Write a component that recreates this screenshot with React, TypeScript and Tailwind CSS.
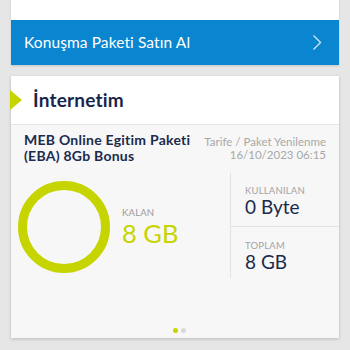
import React from "react";

export default function App() {
  return (
    <div
      className="w-[350px] h-[350px] overflow-hidden bg-[#e6e6e6] px-[11px]"
      style={{ fontFamily: "Lato, 'Open Sans', sans-serif" }}
    >
      <div className="shadow-[0_1px_2px_rgba(0,0,0,0.15)]">
        <div className="h-[20px] bg-white" />
        <div className="h-[45px] bg-[#0a85cf] flex items-center justify-between pl-[13px] pr-[17px]">
          <span className="text-white text-[15.5px] tracking-[0.1px]">Konuşma Paketi Satın Al</span>
          <svg width="10" height="17" viewBox="0 0 10 17" fill="none">
            <path d="M1.5 1.5 L8.5 8.5 L1.5 15.5" stroke="#cfe6f5" strokeWidth="1.4" />
          </svg>
        </div>
      </div>

      <div className="mt-[11px] h-[262px] bg-[#f7f7f7] shadow-[0_1px_3px_rgba(0,0,0,0.2)] flex flex-col">
        <div className="h-[49px] bg-white border-b border-[#e4e4e4] flex items-center">
          <svg width="12" height="20" viewBox="0 0 12 20" className="ml-[-1px]">
            <polygon points="0,0 12,10 0,20" fill="#c6d400" />
          </svg>
          <span className="ml-[11px] text-[#16264a] text-[19px] font-bold tracking-[0.2px]">İnternetim</span>
        </div>

        <div className="flex justify-between pl-[13px] pr-[13px] pt-[7px]">
          <div className="text-[#1b2b4d] text-[14px] font-bold leading-[16px] tracking-[0.25px]">
            <div>MEB Online Egitim Paketi</div>
            <div>(EBA) 8Gb Bonus</div>
          </div>
          <div className="text-[#a8a8a8] text-[11.5px] leading-[13px] text-right pt-[3px]">
            <div>Tarife / Paket Yenilenme</div>
            <div>16/10/2023 06:15</div>
          </div>
        </div>

        <div className="flex mt-[9px] h-[105px]">
          <div className="flex w-[219px]">
            <svg width="94" height="94" viewBox="0 0 94 94" className="ml-[6px] mt-[7px]">
              <circle cx="47" cy="47" r="41.5" fill="none" stroke="#c6d400" strokeWidth="9" />
            </svg>
            <div className="ml-[11px] mt-[35px]">
              <div className="text-[#9a9a9a] text-[9.5px] leading-[10px] tracking-[0.2px]">KALAN</div>
              <div className="text-[#c6d400] text-[25.5px] leading-[28px] mt-[1px]">8 GB</div>
            </div>
          </div>
          <div className="flex-1 border-l border-[#e2e2e2] flex flex-col">
            <div className="h-[54px] border-b border-[#e2e2e2] pl-[14px] pt-[13px]">
              <div className="text-[#a3a3a3] text-[9.5px] leading-[10px] tracking-[0.2px]">KULLANILAN</div>
              <div className="text-[#1b2b4d] text-[19px] leading-[22px]">0 Byte</div>
            </div>
            <div className="pl-[14px] pt-[14px]">
              <div className="text-[#a3a3a3] text-[9.5px] leading-[10px] tracking-[0.2px]">TOPLAM</div>
              <div className="text-[#1b2b4d] text-[19px] leading-[22px]">8 GB</div>
            </div>
          </div>
        </div>

        <div className="flex-1" />
        <div className="flex justify-center gap-[3px] pb-[5px] pl-[8px]">
          <div className="w-[5px] h-[5px] rounded-full bg-[#c6d400]" />
          <div className="w-[5px] h-[5px] rounded-full bg-[#d8d8d8]" />
        </div>
      </div>
    </div>
  );
}
